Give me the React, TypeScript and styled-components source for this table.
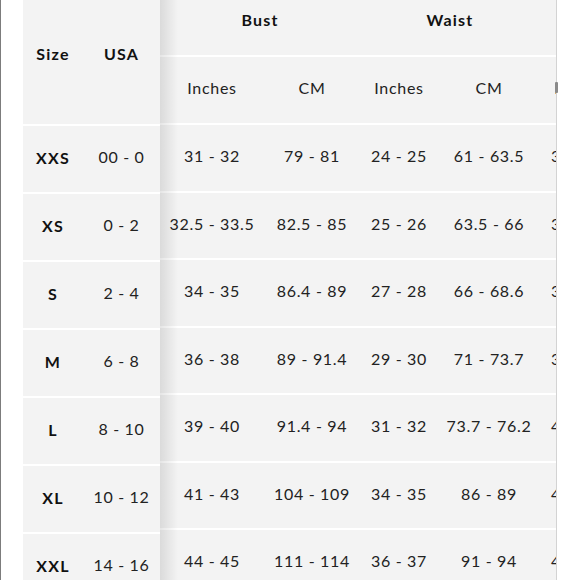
import React from 'react';
import styled, { createGlobalStyle } from 'styled-components';

const GlobalStyle = createGlobalStyle`
    html, body {
        margin: 0;
        padding: 0;
        background: #ffffff;
    }
    body {
        font-family: Lato, "Open Sans", sans-serif;
        color: #1d1d1d;
        overflow: hidden;
    }
`;

// the phone frame: thin grey edge on the left, white gutter, then the chart
const Screen = styled.div`
    width: 580px;
    height: 580px;
    box-sizing: border-box;
    overflow: hidden;
    border-left: 1px solid #7c7c7c;
    padding-left: 22px;
    background: #ffffff;
`;

const Chart = styled.div`
    position: relative;
    display: flex;
    width: 534px;
    box-sizing: border-box;
    margin-top: -14px;
    background: #f3f3f3;
    border-right: 1px solid #d3d3d3;
`;

const ScrollThumb = styled.div`
    position: absolute;
    right: -2px;
    top: 96px;
    width: 3px;
    height: 11px;
    border-radius: 1px;
    background: #8a8a8a;
`;

const Fixed = styled.div`
    flex: 0 0 137px;
    display: flex;
    flex-direction: column;
`;

const Scroller = styled.div`
    position: relative;
    flex: 1;
    overflow: hidden;

    /* the pinned columns cast a soft shadow over the scrolling part */
    &::before {
        content: '';
        position: absolute;
        left: 0;
        top: 0;
        bottom: 0;
        width: 18px;
        background: linear-gradient(to right, rgba(0, 0, 0, 0.1), rgba(0, 0, 0, 0));
        z-index: 1;
        pointer-events: none;
    }
`;

const Wide = styled.div`
    width: 554px;
    display: flex;
    flex-direction: column;
`;

const Row = styled.div<{ $cols: string; $h: number; $line?: boolean }>`
    display: grid;
    grid-template-columns: ${p => p.$cols};
    height: ${p => p.$h}px;
    box-sizing: border-box;
    border-top: ${p => (p.$line ? '2px solid #ffffff' : 'none')};
`;

const Cell = styled.div<{ $bold?: boolean; $span?: number }>`
    display: flex;
    align-items: center;
    justify-content: center;
    box-sizing: border-box;
    padding-bottom: ${p => (p.$bold ? '3px' : '5px')};
    grid-column: span ${p => p.$span || 1};
    white-space: nowrap;
    font-size: 16px;
    letter-spacing: ${p => (p.$bold ? '1.2px' : '0.7px')};
    font-weight: ${p => (p.$bold ? 700 : 400)};
    color: ${p => (p.$bold ? '#111111' : '#222222')};
`;

const LEFT_COLS = '60px 77px';
const RIGHT_COLS = '104px 96px 78px 102px 78px 96px';

const sizes = [
    { size: 'XXS', usa: '00 - 0', vals: ['31 - 32', '79 - 81', '24 - 25', '61 - 63.5', '33 - 34', '84 - 86'] },
    { size: 'XS', usa: '0 - 2', vals: ['32.5 - 33.5', '82.5 - 85', '25 - 26', '63.5 - 66', '35 - 36', '89 - 91'] },
    { size: 'S', usa: '2 - 4', vals: ['34 - 35', '86.4 - 89', '27 - 28', '66 - 68.6', '37 - 38', '94 - 96'] },
    { size: 'M', usa: '6 - 8', vals: ['36 - 38', '89 - 91.4', '29 - 30', '71 - 73.7', '39 - 40', '99 - 101'] },
    { size: 'L', usa: '8 - 10', vals: ['39 - 40', '91.4 - 94', '31 - 32', '73.7 - 76.2', '41 - 42', '104 - 106'] },
    { size: 'XL', usa: '10 - 12', vals: ['41 - 43', '104 - 109', '34 - 35', '86 - 89', '43 - 44', '109 - 112'] },
    { size: 'XXL', usa: '14 - 16', vals: ['44 - 45', '111 - 114', '36 - 37', '91 - 94', '45 - 46', '114 - 117'] },
];

const App: React.FC = () => {
    return (
        <>
            <GlobalStyle />
            <Screen>
                <Chart>
                    <Fixed>
                        <Row $cols={LEFT_COLS} $h={138}>
                            <Cell $bold>Size</Cell>
                            <Cell $bold>USA</Cell>
                        </Row>
                        {sizes.map(s => (
                            <Row key={s.size} $cols={LEFT_COLS} $h={68} $line>
                                <Cell $bold>{s.size}</Cell>
                                <Cell>{s.usa}</Cell>
                            </Row>
                        ))}
                    </Fixed>
                    <Scroller>
                        <Wide>
                            <Row $cols={RIGHT_COLS} $h={69}>
                                <Cell $bold $span={2}>Bust</Cell>
                                <Cell $bold $span={2}>Waist</Cell>
                                <Cell $bold $span={2}>Hips</Cell>
                            </Row>
                            <Row $cols={RIGHT_COLS} $h={68} $line>
                                <Cell>Inches</Cell>
                                <Cell>CM</Cell>
                                <Cell>Inches</Cell>
                                <Cell>CM</Cell>
                                <Cell>Inches</Cell>
                                <Cell>CM</Cell>
                            </Row>
                            {sizes.map((s, i) => (
                                <Row key={s.size} $cols={RIGHT_COLS} $h={i % 2 === 0 ? 68 : 67} $line>
                                    {s.vals.map((v, j) => (
                                        <Cell key={j}>{v}</Cell>
                                    ))}
                                </Row>
                            ))}
                        </Wide>
                    </Scroller>
                    <ScrollThumb />
                </Chart>
            </Screen>
        </>
    );
};

export default App;
